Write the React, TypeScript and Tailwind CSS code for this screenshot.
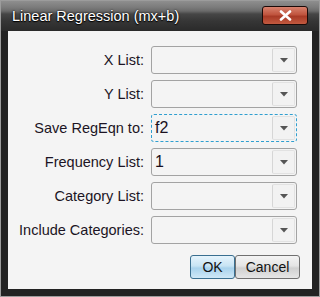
import { useState } from "react";

const rows = [
  { label: "X List:", value: "" },
  { label: "Y List:", value: "" },
  { label: "Save RegEqn to:", value: "f2", focused: true },
  { label: "Frequency List:", value: "1" },
  { label: "Category List:", value: "" },
  { label: "Include Categories:", value: "" },
];

function Caret() {
  return (
    <svg width="8" height="5" viewBox="0 0 8 5">
      <path d="M0 0h8L4 4.5z" fill="#555" />
    </svg>
  );
}

function Combo({ value, focused }: { value: string; focused?: boolean }) {
  return (
    <div
      className={`flex h-[28px] w-[146px] items-stretch rounded-[3px] bg-[#f4f4f4] p-[1px] ${
        focused
          ? "border border-dashed border-[#2f9fd0]"
          : "border border-[#a3a3a3]"
      }`}
    >
      <div className="flex flex-1 items-center pl-[2px] text-[16px] leading-none text-[#1a1020]">
        {value}
      </div>
      <div className="flex w-[23px] items-center justify-center rounded-[2px] border border-[#e2e2e2] border-l-[#d6d6d6] bg-[#f2f2f2]">
        <Caret />
      </div>
    </div>
  );
}

export default function App() {
  const [active] = useState(2);

  return (
    <div
      className="flex h-[297px] w-[320px] flex-col border border-[#9c9c9c] bg-[#222222] text-[#1c1424]"
      style={{ fontFamily: '"Liberation Sans", Arial, sans-serif' }}
    >
      {/* Title bar */}
      <div className="flex h-[30px] items-center justify-between bg-[linear-gradient(to_bottom,#8e8e8e_0px,#7c7c7c_6px,#6a6a6a_10px,#464646_13px,#363636_20px,#2a2a2a_30px)] pl-[11px] pr-[11px]">
        <span className="mt-[2px] text-[14.5px] text-white [text-shadow:0_0_2px_#000,0_1px_1px_#000]">
          Linear Regression (mx+b)
        </span>
        <button className="mt-[-2px] flex h-[19px] w-[46px] items-center justify-center rounded-[3px] border border-[#1a0a08] bg-[linear-gradient(to_bottom,#d8826e_0%,#c0543e_45%,#a83a26_55%,#c25a40_100%)]">
          <svg width="13" height="11" viewBox="0 0 13 11">
            <path
              d="M2 1.5l9 8M11 1.5l-9 8"
              stroke="#fff"
              strokeWidth="2.6"
              strokeLinecap="round"
            />
          </svg>
        </button>
      </div>

      {/* Body */}
      <div className="mx-[7px] mb-[7px] flex flex-1 flex-col bg-[#f4f4f4] pt-[15px] pr-[15px]">
        <div className="flex flex-col gap-[6px]">
          {rows.map((r, i) => (
            <div key={r.label} className="flex items-center justify-end gap-[7px]">
              <span className="text-[14.5px] leading-none">{r.label}</span>
              <Combo value={r.value} focused={i === active} />
            </div>
          ))}
        </div>
        <div className="mt-[11px] mr-[-3px] flex justify-end">
          <button className="h-[24px] w-[45px] rounded-[3px] border border-[#3a6f90] bg-[linear-gradient(to_bottom,#e6f4fc_0%,#c8e4f4_45%,#a8d2ec_55%,#cfe8f7_100%)] text-[14px] text-[#111]">
            OK
          </button>
          <button className="h-[24px] w-[65px] rounded-[3px] border border-[#707070] bg-[linear-gradient(to_bottom,#f4f4f4_0%,#e4e4e4_45%,#d0d0d0_55%,#e6e6e6_100%)] text-[14px] text-[#111]">
            Cancel
          </button>
        </div>
      </div>
    </div>
  );
}
